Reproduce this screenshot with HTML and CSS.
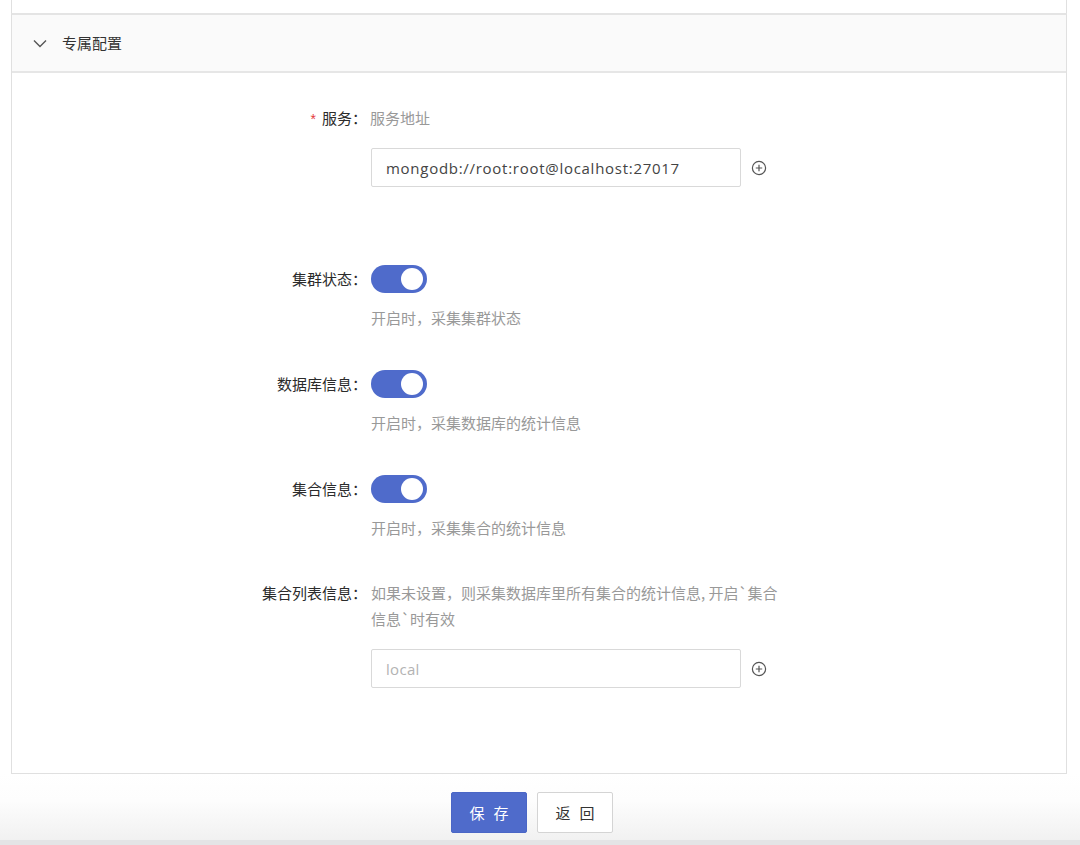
FILE: index.html
```html
<!DOCTYPE html>
<html lang="zh-CN">
<head>
<meta charset="utf-8">
<title>专属配置</title>
<link rel="stylesheet" href="styles.css">
</head>
<body>
<div class="page">
  <div class="stub"></div>
  <div class="panel">
    <div class="panel-head">
      <svg class="chev" width="14" height="9" viewBox="0 0 14 9"><path d="M1 1.5 L7 7.5 L13 1.5" fill="none" stroke="#555" stroke-width="1.4"/></svg>
      <span class="panel-title">专属配置</span>
    </div>
    <div class="form">
      <div class="item item-service">
        <div class="label"><span class="req">*</span>服务：</div>
        <div class="control">
          <div class="help inline">服务地址</div>
          <div class="input-row">
            <div class="input">mongodb://root:root@localhost:27017</div>
            <svg class="plus" width="16" height="16" viewBox="0 0 16 16"><circle cx="8" cy="8" r="6.6" fill="none" stroke="#555" stroke-width="1.2"/><path d="M8 4.8 V11.2 M4.8 8 H11.2" stroke="#555" stroke-width="1.2"/></svg>
          </div>
        </div>
      </div>
      <div class="item item-switch first-switch">
        <div class="label sw-label">集群状态：</div>
        <div class="control">
          <div class="switch"><span class="knob"></span></div>
          <div class="help">开启时，采集集群状态</div>
        </div>
      </div>
      <div class="item item-switch">
        <div class="label sw-label">数据库信息：</div>
        <div class="control">
          <div class="switch"><span class="knob"></span></div>
          <div class="help">开启时，采集数据库的统计信息</div>
        </div>
      </div>
      <div class="item item-switch">
        <div class="label sw-label">集合信息：</div>
        <div class="control">
          <div class="switch"><span class="knob"></span></div>
          <div class="help">开启时，采集集合的统计信息</div>
        </div>
      </div>
      <div class="item item-list">
        <div class="label list-label">集合列表信息：</div>
        <div class="control">
          <div class="help wrap">如果未设置，则采集数据库里所有集合的统计信息, 开启`集合信息`时有效</div>
          <div class="input-row second">
            <div class="input placeholder">local</div>
            <svg class="plus" width="16" height="16" viewBox="0 0 16 16"><circle cx="8" cy="8" r="6.6" fill="none" stroke="#555" stroke-width="1.2"/><path d="M8 4.8 V11.2 M4.8 8 H11.2" stroke="#555" stroke-width="1.2"/></svg>
          </div>
        </div>
      </div>
    </div>
  </div>
  <div class="footer">
    <button class="btn btn-primary">保存</button>
    <button class="btn btn-default">返回</button>
  </div>
  <div class="bottom-strip"></div>
</div>
</body>
</html>
```
FILE: styles.css
```css
html, body {
  margin: 0;
  padding: 0;
  background: #fff;
}
body {
  font-family: "Noto Sans CJK SC", "Open Sans", sans-serif;
  font-size: 15px;
  color: #333;
  width: 1080px;
  height: 845px;
  overflow: hidden;
}
.page {
  display: flex;
  flex-direction: column;
  height: 845px;
}
.stub {
  height: 13px;
  margin: 0 13px 0 11px;
  border-left: 1px solid #e0e0e0;
  border-right: 1px solid #e0e0e0;
  flex: none;
}
.panel {
  margin: 0 13px 0 11px;
  border: 1px solid #e0e0e0;
  border-top: 2px solid #e4e4e4;
  flex: none;
}
.panel-head {
  height: 56px;
  background: #fafafa;
  border-bottom: 2px solid #e6e6e6;
  display: flex;
  align-items: center;
  padding-left: 21px;
}
.chev {
  margin-top: 1px;
}
.panel-title {
  margin-left: 15px;
  font-size: 15px;
  color: #333;
  line-height: 20px;
}
.form {
  padding: 33px 0 85px 0;
}
.item {
  display: grid;
  grid-template-columns: 355px 1fr;
  column-gap: 4px;
}
.label {
  text-align: right;
  color: #2b2b2b;
  line-height: 24px;
  white-space: nowrap;
}
.req {
  color: #e4393c;
  margin-right: 6px;
  font-family: "Liberation Sans", sans-serif;
  font-size: 14px;
}
.help {
  color: #999;
  line-height: 24px;
}
.help.inline {
  margin-left: -1px;
}
.help.wrap {
  width: 415px;
  line-height: 26px;
}
.input-row {
  display: flex;
  align-items: center;
  margin-top: 18px;
}
.input-row.second {
  margin-top: 17px;
}
.input {
  width: 354px;
  height: 37px;
  border: 1px solid #d9d9d9;
  border-radius: 2px;
  padding-left: 14px;
  display: flex;
  align-items: center;
  font-family: "Open Sans", "Liberation Sans", sans-serif;
  font-size: 15px;
  color: #444;
  letter-spacing: 0.72px;
}
.input.placeholder {
  color: #b3b3b3;
  letter-spacing: 0.3px;
}
.plus {
  margin-left: 10px;
}
.first-switch {
  margin-top: 78px;
}
.item-switch + .item-switch {
  margin-top: 40px;
}
.sw-label {
  line-height: 28px;
}
.switch {
  width: 56px;
  height: 28px;
  border-radius: 14px;
  background: #4f6bcb;
  position: relative;
  margin-bottom: 13px;
}
.knob {
  position: absolute;
  right: 4px;
  top: 3px;
  width: 22px;
  height: 22px;
  border-radius: 50%;
  background: #fff;
}
.item-list {
  margin-top: 40px;
}
.list-label {
  line-height: 26px;
}
.footer {
  flex: 1;
  display: flex;
  justify-content: center;
  align-items: flex-start;
  gap: 10px;
  padding-top: 18px;
  padding-right: 16px;
  background: linear-gradient(#ffffff 0%, #fdfdfd 40%, #f1f1f1 100%);
}
.btn {
  width: 76px;
  height: 41px;
  border-radius: 2px;
  font-family: "Noto Sans CJK SC", sans-serif;
  font-size: 15px;
  letter-spacing: 9px;
  padding: 0 0 0 9px;
  cursor: pointer;
}
.btn-primary {
  background: #4f6bcb;
  border: 1px solid #4a66c6;
  color: #fff;
}
.btn-default {
  background: #fff;
  border: 1px solid #d4d4d4;
  color: #333;
}
.bottom-strip {
  height: 5px;
  background: #e4e4e6;
  flex: none;
}
```
